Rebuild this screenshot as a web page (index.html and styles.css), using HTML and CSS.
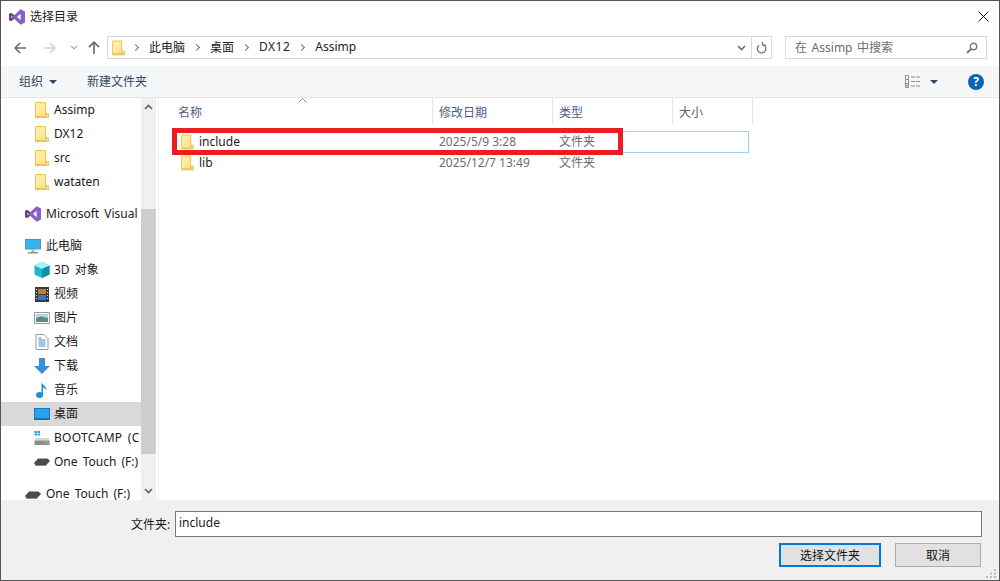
FILE: index.html
```html
<!DOCTYPE html>
<html lang="zh-CN">
<head>
  <meta charset="UTF-8">
  <title>选择目录</title>
  <link rel="stylesheet" href="styles.css">
</head>
<body>

  <svg class="icon-defs" width="0" height="0">
    <defs>
      <linearGradient id="folderFill" x1="0" y1="0" x2="1" y2="1">
        <stop offset="0" stop-color="#fff2b5"/>
        <stop offset="1" stop-color="#fde08a"/>
      </linearGradient>
    </defs>
    <symbol id="folder" viewBox="0 0 14 16">
      <path d="M.5.500h10v14H.500z" fill="url(#folderFill)" stroke="#eac558"/>
      <path d="M10.500 11.500h3v4h-13v-1h10z" fill="#f6d877" stroke="#e8c04f" stroke-width=".8"/>
    </symbol>
    <symbol id="vs" viewBox="0 0 16 16">
      <path d="M11.600.2 16 2.400v11.200l-4.400 2.200L5.200 9.700l-3 2.400L0 11V5l2.200-1.100 3 2.400zM11.600 4.800 8 8l3.600 3.200zM2.200 6.200v3.600L4 8z" fill="#8661c5" fill-rule="evenodd"/>
      <path d="M2.200 3.900 0 5v6l2.200 1.100 3-2.400-1.200-1.700-1.800 1.800V6.200L4 8l1.200-1.700z" fill="#68407f"/>
    </symbol>
    <symbol id="drive" viewBox="0 0 16 8">
      <path d="M4 .5h9.500l2.500 2.500-4 4H1.500L0 5z" fill="#4b4b4b"/>
      <path d="M0 5l1.500 3H12l4-5-4 4H1.500z" fill="#8a8a8a"/>
    </symbol>
  </svg>

  <div class="window">
    <div class="title-bar">
      <svg class="title-icon" width="16" height="16"><use href="#vs"/></svg>
      <span class="title-text">选择目录</span>
      <svg class="close-icon" width="11" height="11" viewBox="0 0 11 11"><path d="M.5.500l10 10M10.500.500l-10 10" stroke="#111" fill="none"/></svg>
    </div>

    <div class="nav-bar">
      <svg class="nav-back" width="12" height="12" viewBox="0 0 12 12"><path d="M6 1 1.200 6 6 11M1.200 6H12" stroke="#6d6d6d" stroke-width="1.700" fill="none"/></svg>
      <svg class="nav-forward" width="12" height="12" viewBox="0 0 12 12"><path d="M6 1l4.800 5L6 11M10.800 6H0" stroke="#d2d2d2" stroke-width="1.700" fill="none"/></svg>
      <svg class="nav-recent" width="8" height="5" viewBox="0 0 8 5"><path d="M1 .8l3 3 3-3" stroke="#a8a8a8" stroke-width="1.200" fill="none"/></svg>
      <svg class="nav-up" width="12" height="13" viewBox="0 0 12 13"><path d="M1 6.200 6 1.200l5 5M6 1.200V13" stroke="#6d6d6d" stroke-width="1.700" fill="none"/></svg>

      <div class="address-box">
        <svg class="address-folder" width="13" height="16"><use href="#folder"/></svg>
        <span class="crumb-sep"></span><span class="crumb crumb-first">此电脑</span>
        <span class="crumb-sep"></span><span class="crumb">桌面</span>
        <span class="crumb-sep"></span><span class="crumb crumb-latin">DX12</span>
        <span class="crumb-sep"></span><span class="crumb">Assimp</span>
        <svg class="address-drop" width="9" height="6" viewBox="0 0 9 6"><path d="M1 1l3.500 3.500L8 1" stroke="#6d6d6d" stroke-width="1.600" fill="none"/></svg>
        <div class="address-refresh">
          <svg width="11" height="12" viewBox="0 0 11 12"><path d="M3 3.300a4.200 4.200 0 1 0 4-.6M6.500 0v3.200H10" stroke="#777" stroke-width="1.300" fill="none"/></svg>
        </div>
      </div>

      <div class="search-box">
        <span>在 Assimp 中搜索</span>
        <svg width="12" height="12" viewBox="0 0 12 12"><circle cx="7.500" cy="4.500" r="3.200" stroke="#7b7b7b" stroke-width="1.400" fill="none"/><path d="M5 7 1 11" stroke="#7b7b7b" stroke-width="2"/></svg>
      </div>
    </div>

    <div class="tool-bar">
      <span class="tool-item">组织</span>
      <span class="caret"></span>
      <span class="tool-item tool-new">新建文件夹</span>
      <svg class="view-icon" width="16" height="13" viewBox="0 0 16 13">
        <path d="M.5.500h3v12h-3zM.5 4.500h3M.5 8.500h3" stroke="#8a8a8a" fill="#fff"/>
        <path d="M6 2h4M11 2h4M6 6.500h4M11 6.500h4M6 11h4M11 11h4" stroke="#8a8a8a"/>
        <rect x="1.500" y="9.500" width="1" height="2" fill="#c33"/>
      </svg>
      <span class="caret caret-view"></span>
      <span class="help-btn">?</span>
    </div>

    <div class="content">
      <div class="side-tree">
        <div class="tree-row"><svg class="tree-icon" width="13" height="16"><use href="#folder"/></svg><span>Assimp</span></div>
        <div class="tree-row"><svg class="tree-icon" width="13" height="16"><use href="#folder"/></svg><span>DX12</span></div>
        <div class="tree-row"><svg class="tree-icon" width="13" height="16"><use href="#folder"/></svg><span>src</span></div>
        <div class="tree-row"><svg class="tree-icon" width="13" height="16"><use href="#folder"/></svg><span>wataten</span></div>

        <div class="tree-row tree-root tree-gap"><svg class="tree-icon" width="16" height="16"><use href="#vs"/></svg><span>Microsoft Visual</span></div>

        <div class="tree-row tree-root tree-gap">
          <svg class="tree-icon" width="16" height="15" viewBox="0 0 16 15"><path d="M0 0h16v10.500H0z" fill="#5b8fb5"/><path d="M1 1h14v8.500H1z" fill="#36b4f0"/><path d="M6.500 10.500h3V13h-3z" fill="#a9b8c3"/><path d="M3 13h10v1.500H3z" fill="#7f93a3"/></svg>
          <span>此电脑</span>
        </div>
        <div class="tree-row">
          <svg class="tree-icon" width="16" height="16" viewBox="0 0 16 16"><path d="M8 0l7.500 3.500v9L8 16 .5 12.500v-9z" fill="#1fb6c9"/><path d="M8 0l7.500 3.500L8 7 .5 3.500z" fill="#aeeef5"/><path d="M8 7l7.500-3.500v9L8 16z" fill="#0e8fa8"/></svg>
          <span>3D 对象</span>
        </div>
        <div class="tree-row">
          <svg class="tree-icon" width="14" height="15" viewBox="0 0 14 15"><path d="M0 0h14v15H0z" fill="#3c3c3c"/><path d="M3 2h8v5H3z" fill="#c27a2e"/><path d="M3 8h8v5H3z" fill="#3a78b8"/><path d="M1 2h1v1H1zM1 5h1v1H1zM1 8h1v1H1zM1 11h1v1H1zM12 2h1v1h-1zM12 5h1v1h-1zM12 8h1v1h-1zM12 11h1v1h-1z" fill="#ddd"/></svg>
          <span>视频</span>
        </div>
        <div class="tree-row">
          <svg class="tree-icon" width="16" height="12" viewBox="0 0 16 12"><path d="M.5.500h15v11H.500z" fill="#fff" stroke="#9a9a9a"/><path d="M2 2h12v4H2z" fill="#b9d4e4"/><path d="M2 6l5-1.500L14 6v4H2z" fill="#5f8a78"/></svg>
          <span>图片</span>
        </div>
        <div class="tree-row">
          <svg class="tree-icon" width="13" height="16" viewBox="0 0 13 16"><path d="M.5.500h8l4 4v11H.500z" fill="#fff" stroke="#9a9a9a"/><path d="M3 6h7M3 8h7M3 10h7M3 12h7M3 4h3" stroke="#4a8fc4"/></svg>
          <span>文档</span>
        </div>
        <div class="tree-row">
          <svg class="tree-icon" width="16" height="16" viewBox="0 0 16 16"><path d="M5 0h6v8h5l-8 8-8-8h5z" fill="#3e8ddd"/></svg>
          <span>下载</span>
        </div>
        <div class="tree-row">
          <svg class="tree-icon" width="12" height="16" viewBox="0 0 12 16"><ellipse cx="3.500" cy="13" rx="3.500" ry="3" fill="#1b8fe0"/><path d="M5.500 13V0c.5 3 5.500 4 5 9-.5-2-2.500-3.500-3.500-3.500V13z" fill="#1b8fe0"/></svg>
          <span>音乐</span>
        </div>
        <div class="tree-row tree-selected">
          <svg class="tree-icon" width="16" height="12" viewBox="0 0 16 12"><path d="M0 0h16v12H0z" fill="#0f6fb5"/><path d="M.8.800h14.400v9.400H.8z" fill="#2aa1ee"/></svg>
          <span>桌面</span>
        </div>
        <div class="tree-row">
          <svg class="tree-icon" width="15" height="14" viewBox="0 0 15 14"><path d="M0 0h2.500v2H0zM3 0h2.500v2H3zM0 2.500h2.500v2H0zM3 2.500h2.500v2H3z" fill="#1ea7e8"/><path d="M1 7h13l1 2.500H0z" fill="#d6d6d6"/><path d="M0 9.500h15V14H0z" fill="#8d8d8d"/><path d="M10 11h3v1h-3z" fill="#5fd35f"/></svg>
          <span class="tree-caps">BOOTCAMP (C</span>
        </div>
        <div class="tree-row">
          <svg class="tree-icon" width="16" height="8"><use href="#drive"/></svg>
          <span>One Touch (F:)</span>
        </div>
        <div class="tree-row tree-root tree-gap tree-last">
          <svg class="tree-icon" width="16" height="8"><use href="#drive"/></svg>
          <span>One Touch (F:)</span>
        </div>
      </div>

      <div class="side-scroll">
        <svg class="scroll-arrow" width="9" height="6" viewBox="0 0 9 6"><path d="M1 5l3.500-3.500L8 5" stroke="#606060" stroke-width="1.600" fill="none"/></svg>
        <div class="scroll-track"><div class="scroll-thumb"></div></div>
        <svg class="scroll-arrow" width="9" height="6" viewBox="0 0 9 6"><path d="M1 1l3.500 3.500L8 1" stroke="#606060" stroke-width="1.600" fill="none"/></svg>
      </div>

      <div class="file-list">
        <div class="list-head">
          <div class="head-cell head-name">名称
            <svg class="sort-mark" width="9" height="5" viewBox="0 0 9 5"><path d="M.5 4.500l4-4 4 4" stroke="#8a8a8a" fill="none"/></svg>
          </div>
          <div class="head-cell head-date">修改日期</div>
          <div class="head-cell head-type">类型</div>
          <div class="head-cell head-size">大小</div>
        </div>
        <div class="file-row file-focus">
          <div class="file-name"><svg width="13" height="16"><use href="#folder"/></svg><span>include</span></div>
          <div class="file-meta">2025/5/9 3:28</div>
          <div class="file-meta">文件夹</div>
        </div>
        <div class="file-row file-next">
          <div class="file-name"><svg width="13" height="16"><use href="#folder"/></svg><span>lib</span></div>
          <div class="file-meta">2025/12/7 13:49</div>
          <div class="file-meta">文件夹</div>
        </div>
      </div>
    </div>

    <div class="bottom-panel">
      <div class="folder-row">
        <label class="folder-label">文件夹:</label>
        <div class="folder-input">include</div>
      </div>
      <div class="button-row">
        <button class="dlg-btn dlg-primary">选择文件夹</button>
        <button class="dlg-btn dlg-cancel">取消</button>
      </div>
    </div>

    <!-- red marker drawn over the screenshot -->
    <div class="red-mark"></div>

    <svg class="grip" width="11" height="9" viewBox="0 0 11 9"><path d="M8 0h2v2H8zM4 3.500h2v2H4zM8 3.500h2v2H8zM0 7h2v2H0zM4 7h2v2H4zM8 7h2v2H8z" fill="#bdbdbd"/></svg>
  </div>

</body>
</html>
```

FILE: styles.css
```css
* {
  box-sizing: border-box;
}

html, body {
  margin: 0;
  padding: 0;
}

body {
  font-family: "Noto Sans", "Noto Sans CJK SC", sans-serif;
  font-size: 12px;
  color: #1a1a1a;
  overflow: hidden;
}

.icon-defs {
  position: absolute;
}

.window {
  position: relative;
  width: 1000px;
  height: 581px;
  display: flex;
  flex-direction: column;
  background: #fff;
  border: 1px solid #555;
  overflow: hidden;
}

/* title */
.title-bar {
  height: 31px;
  display: flex;
  align-items: center;
  padding: 0 10px 0 8px;
  flex: none;
}

.title-text {
  margin: -2px 0 0 5px;
  flex: 1;
  color: #222;
}

/* nav */
.nav-bar {
  height: 34px;
  display: flex;
  align-items: center;
  flex: none;
  padding-bottom: 3px;
}

.nav-back {
  margin-left: 13px;
}

.nav-forward {
  margin-left: 18px;
}

.nav-recent {
  margin-left: 14px;
}

.nav-up {
  margin-left: 10px;
}

.address-box {
  width: 665px;
  height: 23px;
  margin-left: 7px;
  border: 1px solid #d9d9d9;
  display: flex;
  align-items: center;
  padding-left: 4px;
}

.crumb-sep {
  width: 5px;
  height: 5px;
  margin: 0 11px 0 8px;
  border-top: 1.5px solid #707070;
  border-right: 1.5px solid #707070;
  transform: rotate(45deg);
}

.crumb {
  margin: -2px 1px 0 0;
  color: #222;
}

.crumb-latin {
  letter-spacing: .5px;
}

.address-drop {
  margin-left: auto;
  margin-right: 5px;
}

.address-refresh {
  width: 20px;
  height: 100%;
  border-left: 1px solid #d9d9d9;
  display: flex;
  align-items: center;
  justify-content: center;
}

.search-box {
  width: 202px;
  height: 23px;
  margin-left: 13px;
  border: 1px solid #d9d9d9;
  display: flex;
  align-items: center;
  justify-content: space-between;
  padding: 0 8px 0 9px;
  color: #6d6d6d;
}

.search-box span {
  margin-top: -2px;
  word-spacing: 1.500px;
}

/* toolbar */
.tool-bar {
  height: 32px;
  display: flex;
  align-items: center;
  flex: none;
  background: #f5f6f7;
  border-bottom: 1px solid #e5e5e5;
  padding-left: 18px;
  color: #33475f;
}

.tool-item {
  margin-top: -2px;
}

.caret {
  width: 0;
  height: 0;
  margin-left: 6px;
  border-left: 4px solid transparent;
  border-right: 4px solid transparent;
  border-top: 4px solid #33475f;
}

.tool-new {
  margin-left: 30px;
}

.view-icon {
  margin-left: 758px;
}

.caret-view {
  margin-left: 9px;
}

.help-btn {
  width: 16px;
  height: 16px;
  margin-left: 30px;
  border-radius: 50%;
  background: #0a64b5;
  color: #fff;
  font-size: 12px;
  font-weight: 700;
  line-height: 16px;
  text-align: center;
}

/* sidebar + list */
.content {
  flex: 1;
  min-height: 0;
  display: flex;
}

.side-tree {
  width: 140px;
  flex: none;
  white-space: nowrap;
}

.tree-row {
  height: 24px;
  display: flex;
  align-items: center;
  padding-left: 33px;
  color: #1a1a1a;
}

.tree-row span {
  margin-top: -2px;
  word-spacing: 2px;
}

.tree-caps {
  letter-spacing: .3px;
}

.tree-icon {
  flex: none;
  width: 16px;
  margin-right: 4px;
}

.tree-root {
  padding-left: 24px;
}

.tree-root .tree-icon {
  margin-right: 5px;
}

.tree-gap {
  margin-top: 8px;
}

/* cut by the bottom panel, so only the visible part is laid out */
.tree-last {
  height: 18px;
  padding-top: 7px;
  line-height: 11px;
}

.tree-selected {
  background: #d9d9d9;
}

.side-scroll {
  width: 15px;
  flex: none;
  display: flex;
  flex-direction: column;
  align-items: center;
  background: #f0f0f0;
}

.scroll-arrow {
  flex: none;
  margin: 6px 0;
}

.scroll-track {
  flex: 1;
  width: 100%;
  padding-top: 93px;
}

.scroll-thumb {
  height: 245px;
  background: #cdcdcd;
}

.file-list {
  flex: 1;
  margin-left: 2px;
  border-left: 1px solid #f0f0f0;
}

.list-head {
  height: 27px;
  display: flex;
  color: #4c607a;
}

.head-cell {
  position: relative;
  padding: 5px 0 0 6px;
  border-right: 1px solid #e5e5e5;
}

.head-name {
  width: 274px;
  padding-left: 19px;
}

.head-date,
.head-type {
  width: 120px;
}

.head-size {
  width: 80px;
}

.sort-mark {
  position: absolute;
  top: 0;
  left: 139px;
}

.file-row {
  width: 576px;
  height: 22px;
  margin-left: 14px;
  display: grid;
  grid-template-columns: 260px 120px 120px;
  align-items: center;
  border: 1px solid transparent;
}

.file-focus {
  margin-top: 6px;
  border-color: #99d1ff;
}

.file-next {
  margin-top: -1px;
}

.file-name {
  display: flex;
  align-items: center;
  gap: 5px;
  padding-left: 7px;
  color: #1a1a1a;
}

.file-name span,
.file-meta {
  margin-top: -2px;
}

.file-meta {
  padding-left: 5px;
  color: #6d6d6d;
}

/* bottom */
.bottom-panel {
  height: 80px;
  flex: none;
  background: #f0f0f0;
  padding-top: 11px;
}

.folder-row {
  display: flex;
  align-items: center;
  padding-left: 130px;
}

.folder-label {
  width: 44px;
  color: #1a1a1a;
}

.folder-input {
  width: 807px;
  height: 26px;
  padding-left: 3px;
  line-height: 22px;
  background: #fff;
  border: 1px solid #7a7a7a;
}

.button-row {
  display: flex;
  justify-content: flex-end;
  gap: 14px;
  margin-top: 6px;
  padding-right: 18px;
}

.dlg-btn {
  height: 24px;
  padding: 0;
  font: inherit;
  color: #111;
  background: #e1e1e1;
  border: 1px solid #adadad;
}

.dlg-primary {
  width: 102px;
  border: 2px solid #0078d7;
}

.dlg-cancel {
  width: 86px;
}

.red-mark {
  position: absolute;
  left: 171px;
  top: 127px;
  width: 451px;
  height: 27px;
  border: 5px solid #ed1c24;
}

.grip {
  position: absolute;
  right: 2px;
  bottom: 2px;
}
```
